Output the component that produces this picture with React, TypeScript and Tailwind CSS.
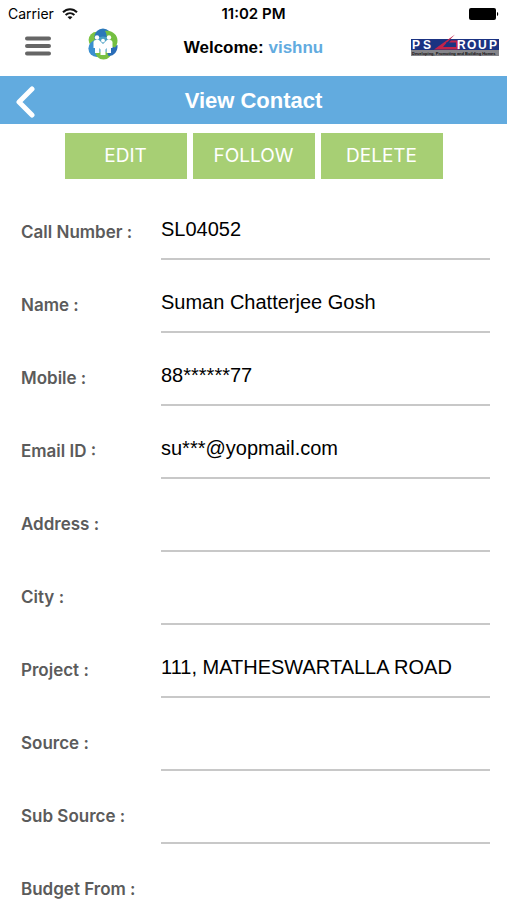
import { useState } from "react";

const contact = [
  { id: "callNumber", label: "Call Number :", value: "SL04052" },
  { id: "name", label: "Name :", value: "Suman Chatterjee Gosh" },
  { id: "mobile", label: "Mobile :", value: "88******77" },
  { id: "email", label: "Email ID :", value: "su***@yopmail.com" },
  { id: "address", label: "Address :", value: "" },
  { id: "city", label: "City :", value: "" },
  { id: "project", label: "Project :", value: "111, MATHESWARTALLA ROAD" },
  { id: "source", label: "Source :", value: "" },
  { id: "subSource", label: "Sub Source :", value: "" },
  { id: "budgetFrom", label: "Budget From :", value: "" },
];

function StatusBar() {
  return (
    <div className="grid h-7 shrink-0 grid-cols-3 items-center px-2 font-['Inter',sans-serif] text-sm text-black">
      <div className="flex items-center gap-2">
        <span>Carrier</span>
        <svg width="16" height="12" viewBox="0 0 16 12" fill="none" stroke="#111" strokeWidth="2">
          <path d="M1 4.3C5 .2 11 .2 15 4.3" />
          <path d="M3.6 7C6.2 4.5 9.8 4.5 12.4 7" />
          <path d="M8 11.6 5.5 9.1C7 7.8 9 7.8 10.5 9.1Z" fill="#111" stroke="none" />
        </svg>
      </div>
      <span className="text-center text-[15px] font-semibold">11:02 PM</span>
      <svg className="justify-self-end" width="30" height="12" viewBox="0 0 30 12">
        <rect width="27" height="12" rx="2" fill="#000" />
        <path d="M28 4c1.6.4 1.6 3.6 0 4Z" fill="#000" />
      </svg>
    </div>
  );
}

function PeopleLogo() {
  return (
    <svg width="30" height="32" viewBox="0 0 30 32">
      <circle cx="8.8" cy="12" r="8.2" fill="#7cc444" />
      <circle cx="8.8" cy="20.5" r="8.4" fill="#3a8fd0" />
      <circle cx="15.5" cy="23" r="8.6" fill="#79c143" />
      <path d="M29.500 17c.5 6-3 11-9 11l-3-8Z" fill="#2a6db8" />
      <circle cx="15" cy="9" r="8.6" fill="#2a78ba" />
      <path d="M17 3c7-1 12.500 4 12.500 9.500 0 3-1 5.500-2.500 7L15 16c4-3 5-8 2-13Z" fill="#74bf41" />
      <circle cx="15" cy="16.500" r="8" fill="#4aa0c4" />
      <g fill="#fff">
        <circle cx="9" cy="9.5" r="2.2" />
        <circle cx="21" cy="9.5" r="2.2" />
        <circle cx="15" cy="12.6" r="1.9" />
        <path d="M5.5 14c.5-2.500 5-3 6.500-1l3 3 3-3c1.500-2 6-1.500 6.500 1v6H23v5h-4.300v-5l-1.200 1.500V27h-5v-5.500L11.300 20v5H7v-5H5.500Z" />
      </g>
    </svg>
  );
}

function GroupLogo() {
  return (
    <svg width="88" height="22" viewBox="0 0 88 22" fontFamily="'Liberation Sans', sans-serif" fontWeight="bold">
      <rect y="5" width="88" height="12" fill="#1b3382" />
      <rect y="16" width="88" height="6" fill="#85858a" />
      <text x="1" y="15" fontSize="12" fill="#fff">P</text>
      <text x="12" y="15" fontSize="12" fill="#fff">S</text>
      <path d="M23 15.5 44 .5 35 9.5l-3 3.5h13V8.5h-7l2-2h8v9Z" fill="#c2244b" />
      <path d="M36 8v5M40 9v4" stroke="#1b3382" strokeWidth="1" />
      <text x="46" y="15" fontSize="12" fill="#fff">R</text>
      <text x="56" y="15" fontSize="12" fill="#fff">O</text>
      <text x="67" y="15" fontSize="12" fill="#fff">U</text>
      <text x="78" y="15" fontSize="12" fill="#fff">P</text>
      <text x="1" y="20.5" fontSize="4" fill="#111">Developing, Promoting and Building Homes</text>
    </svg>
  );
}

export default function App() {
  const [fields, setFields] = useState(contact);

  const update = (id: string, value: string) =>
    setFields(fields.map((f) => (f.id === id ? { ...f, value } : f)));

  return (
    <div className="flex h-screen flex-col overflow-hidden bg-white font-['Liberation_Sans',Arial,sans-serif]">
      <StatusBar />

      {/* App header */}
      <header className="grid h-12 shrink-0 grid-cols-[1fr_auto_1fr] px-2">
        <div className="flex items-start gap-9 pl-4">
          <button aria-label="Menu" className="pt-2">
            <svg width="28" height="20" viewBox="0 0 28 20" stroke="#666" strokeWidth="4" strokeLinecap="round">
              <path d="M3 2.5h22M3 10h22M3 17.5h22" />
            </svg>
          </button>
          <PeopleLogo />
        </div>
        <p className="pt-2 text-[17px] leading-6 font-bold text-black">
          Welcome: <span className="text-[#62abdf]">vishnu</span>
        </p>
        <div className="justify-self-end pt-1.5">
          <GroupLogo />
        </div>
      </header>

      {/* Title bar */}
      <div className="grid h-12 shrink-0 grid-cols-[1fr_auto_1fr] items-center bg-[#62abdf] px-4 text-white">
        <button aria-label="Back" className="justify-self-start pt-1">
          <svg width="20" height="32" viewBox="0 0 20 32" fill="none" stroke="#fff" strokeWidth="5" strokeLinecap="round" strokeLinejoin="round">
            <path d="M16 3 3 16 16 29" />
          </svg>
        </button>
        <h1 className="text-[22px] font-bold">View Contact</h1>
      </div>

      <main className="grow overflow-y-auto [scrollbar-width:none]">
        <div className="mx-auto grid max-w-[378px] grid-cols-3 gap-1.5 pt-[9px] font-['Inter',sans-serif] text-[19px] text-white">
          <button className="h-[46px] bg-[#a7cf74]">EDIT</button>
          <button className="h-[46px] bg-[#a7cf74]">FOLLOW</button>
          <button className="h-[46px] bg-[#a7cf74]">DELETE</button>
        </div>

        <form className="px-[17px] pt-[21px]">
          {fields.map((field) => (
            <div key={field.id} className="flex h-[73px] items-start pl-1">
              <label
                htmlFor={field.id}
                className="flex h-[66px] w-[140px] shrink-0 items-center font-['Inter',sans-serif] text-[17px] font-semibold text-[#5b5b5b]"
              >
                {field.label}
              </label>
              <input
                id={field.id}
                value={field.value}
                onChange={(e) => update(field.id, e.target.value)}
                className="h-[60px] min-w-0 grow border-b-2 border-[#c8c8c8] text-xl text-black outline-none"
              />
            </div>
          ))}
        </form>
      </main>
    </div>
  );
}
